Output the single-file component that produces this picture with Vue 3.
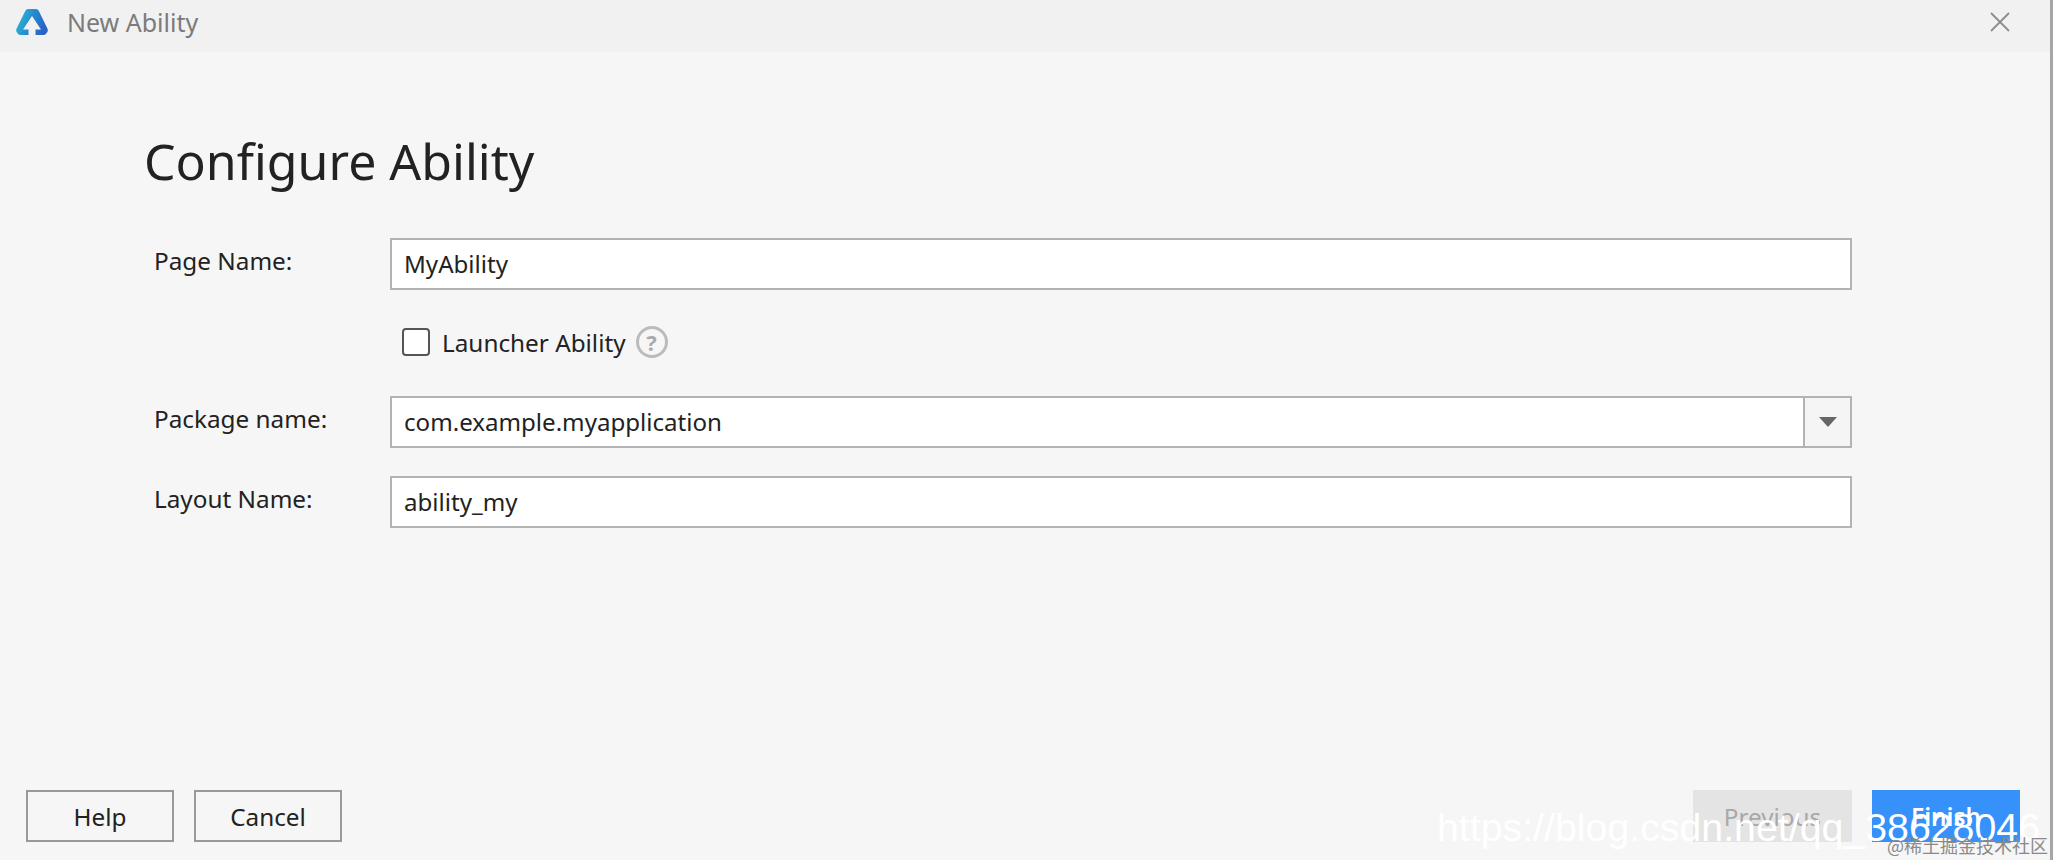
<script setup>
const rows = [
  { label: 'Page Name:', value: 'MyAbility' },
  { label: 'Package name:', value: 'com.example.myapplication', select: true },
  { label: 'Layout Name:', value: 'ability_my' }
]
</script>

<template>
  <div class="dialog">
    <header class="titlebar">
      <svg class="logo" viewBox="0 0 32 26" width="32" height="26">
        <defs>
          <linearGradient id="lg" x1="0" y1="0" x2="1" y2="0.3">
            <stop offset="0" stop-color="#33bcd8" />
            <stop offset="0.5" stop-color="#2393cf" />
            <stop offset="1" stop-color="#2b62c8" />
          </linearGradient>
        </defs>
        <path fill="url(#lg)" d="M9.5 1.5Q10.2 0 12 0H20Q21.8 0 22.6 1.6L31.4 19.6Q32.4 21.6 31 23.6L29.6 25.2Q28.8 26 27.6 26H19.5V20.5H25L16 7L7 20.5H12.5V26H4.4Q3.2 26 2.4 25.2L1 23.6Q-.4 21.6 .6 19.6Z" />
      </svg>
      <span class="app-title">New Ability</span>
      <svg class="close" viewBox="0 0 20 20" width="20" height="20">
        <path d="M1 1L19 19M19 1L1 19" stroke="#8c8c8c" stroke-width="1.8" fill="none" />
      </svg>
    </header>

    <main class="content">
      <h1>Configure Ability</h1>
      <div class="form">
        <div class="row">
          <label>{{ rows[0].label }}</label>
          <div class="field"><span>{{ rows[0].value }}</span></div>
        </div>
        <div class="check-row">
          <span class="checkbox"></span>
          <span class="check-label">Launcher Ability</span>
          <span class="help">?</span>
        </div>
        <div class="row">
          <label>{{ rows[1].label }}</label>
          <div class="field">
            <span>{{ rows[1].value }}</span>
            <span class="arrow-box"><i class="arrow"></i></span>
          </div>
        </div>
        <div class="row">
          <label>{{ rows[2].label }}</label>
          <div class="field"><span>{{ rows[2].value }}</span></div>
        </div>
      </div>
    </main>

    <footer class="footer">
      <div class="group">
        <button class="btn">Help</button>
        <button class="btn">Cancel</button>
      </div>
      <div class="group">
        <button class="btn disabled">Previous</button>
        <button class="btn primary">Finish</button>
      </div>
    </footer>

    <div class="wm-url">https://blog.csdn.net/qq_38628046</div>
    <div class="wm-cn">@稀土掘金技术社区</div>
  </div>
</template>

<style>
html, body { margin: 0; padding: 0; }
</style>

<style scoped>
.dialog {
  position: relative;
  width: 2053px;
  height: 860px;
  box-sizing: border-box;
  overflow: hidden;
  display: flex;
  flex-direction: column;
  background: #f6f6f6;
  border-right: 3px solid #a6a6a6;
  font-family: "Noto Sans", "Open Sans", sans-serif;
  font-size: 24.3px;
  color: #222;
}
.titlebar {
  height: 52px;
  flex: none;
  display: flex;
  align-items: center;
  padding: 0 40px 0 16px;
  background: #f1f1f1;
}
.logo { margin-top: -8px; flex: none; }
.app-title {
  margin-left: 19px;
  margin-top: -9px;
  color: #7b7b7b;
  font-size: 25px;
}
.close { margin-left: auto; margin-top: -8px; }
.content {
  flex: 1;
  padding: 0 198px 0 144px;
}
h1 {
  margin: 0;
  padding-top: 74px;
  font-size: 50px;
  line-height: 70px;
  font-weight: 400;
  color: #222;
}
.form {
  margin-top: 42px;
  display: flex;
  flex-direction: column;
}
.row {
  display: flex;
  align-items: center;
  height: 52px;
  margin-bottom: 28px;
}
label {
  width: 236px;
  margin-left: 10px;
  flex: none;
  margin-top: -8px;
}
.field {
  flex: 1;
  height: 52px;
  box-sizing: border-box;
  border: 2px solid #b3b3b3;
  background: #fff;
  display: flex;
  align-items: center;
  padding-left: 12px;
  justify-content: space-between;
  font-size: 24.1px;
}
.field > span:first-child { margin-top: -2px; }
.arrow-box {
  width: 47px;
  align-self: stretch;
  box-sizing: border-box;
  border-left: 2px solid #b3b3b3;
  background: #f5f5f5;
  display: flex;
  align-items: center;
  justify-content: center;
}
.arrow {
  width: 0;
  height: 0;
  border-left: 9px solid transparent;
  border-right: 9px solid transparent;
  border-top: 10px solid #666;
}
.check-row {
  display: flex;
  align-items: center;
  height: 32px;
  margin: 8px 0 38px 258px;
}
.checkbox {
  width: 28px;
  height: 28px;
  box-sizing: border-box;
  border: 2px solid #555;
  border-radius: 4px;
  background: #fff;
}
.check-label { margin-left: 12px; }
.help {
  width: 32px;
  height: 32px;
  margin-left: 10px;
  box-sizing: border-box;
  border: 3px solid #bbb;
  border-radius: 50%;
  color: #aaa;
  font-size: 22px;
  font-weight: 700;
  display: flex;
  align-items: center;
  justify-content: center;
}
.footer {
  flex: none;
  height: 70px;
  padding: 0 30px 0 26px;
  display: flex;
  justify-content: space-between;
  align-items: flex-start;
}
.group { display: flex; gap: 20px; }
.btn {
  width: 148px;
  height: 52px;
  box-sizing: border-box;
  border: 2px solid #999;
  background: #f6f6f6;
  font: inherit;
  color: #222;
  padding: 0;
}
.disabled {
  width: 159px;
  background: #e4e4e4;
  border-color: #e4e4e4;
  color: #a8a8a8;
}
.primary {
  background: #3691fb;
  border-color: #3691fb;
  color: #fff;
  font-weight: 600;
}
.wm-url {
  position: absolute;
  left: 1437px;
  top: 802px;
  font-family: "Liberation Sans", sans-serif;
  font-size: 39.3px;
  line-height: 50px;
  color: #fff;
  white-space: nowrap;
}
.wm-cn {
  position: absolute;
  left: 1887px;
  top: 833px;
  font-family: "Noto Sans CJK SC", sans-serif;
  font-size: 18px;
  line-height: 24px;
  color: #8a8a8a;
  white-space: nowrap;
}
</style>
